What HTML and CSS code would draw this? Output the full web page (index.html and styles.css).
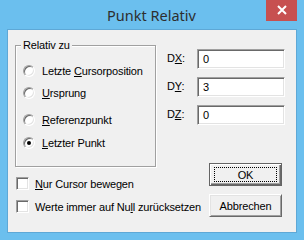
FILE: index.html
```html
<!DOCTYPE html>
<html>
<head>
<meta charset="utf-8">
<link rel="stylesheet" href="styles.css">
</head>
<body>
<div class="window">
  <div class="titlebar">
    <span class="title">Punkt Relativ</span>
    <span class="close">
      <svg width="10" height="10" viewBox="0 0 10 10"><path d="M1 1 L9 9 M9 1 L1 9" stroke="#fff" stroke-width="2"/></svg>
    </span>
  </div>
  <div class="client">
    <div class="left">
      <div class="group">
        <span class="legend">Relativ zu</span>
        <div class="radio r1"><span class="rb"></span><span>Letzte <u>C</u>ursorposition</span></div>
        <div class="radio r2"><span class="rb"></span><span><u>U</u>rsprung</span></div>
        <div class="radio r3"><span class="rb"></span><span><u>R</u>eferenzpunkt</span></div>
        <div class="radio r4"><span class="rb checked"></span><span><u>L</u>etzter Punkt</span></div>
      </div>
      <div class="check c1"><span class="cb"></span><span><u>N</u>ur Cursor bewegen</span></div>
      <div class="check c2"><span class="cb"></span><span>Werte immer auf Nu<u>l</u>l zurücksetzen</span></div>
    </div>
    <div class="right">
      <div class="field f1"><span class="lbl">D<u>X</u>:</span><span class="edit">0</span></div>
      <div class="field f2"><span class="lbl">D<u>Y</u>:</span><span class="edit">3</span></div>
      <div class="field f3"><span class="lbl">D<u>Z</u>:</span><span class="edit">0</span></div>
      <div class="btn default"><span class="focus">OK</span></div>
      <div class="btn second"><span>Abbrechen</span></div>
    </div>
  </div>
</div>
</body>
</html>
```
FILE: styles.css
```css
html, body {
  margin: 0;
  padding: 0;
}
body {
  width: 304px;
  height: 240px;
  overflow: hidden;
  font-family: "Liberation Sans", Arial, sans-serif;
  font-size: 11px;
  letter-spacing: -0.15px;
  color: #000;
}
.window {
  width: 304px;
  height: 240px;
  background: #6bbfee;
  box-sizing: border-box;
  padding: 0 8px 8px 8px;
  display: flex;
  flex-direction: column;
}
.titlebar {
  height: 30px;
  position: relative;
  display: flex;
  justify-content: center;
  align-items: center;
}
.title {
  font-family: "Noto Sans", "Open Sans", sans-serif;
  font-size: 14.5px;
  letter-spacing: 0;
  color: #2e2e2e;
  margin-top: -1px;
  margin-left: -1px;
}
.close {
  position: absolute;
  right: -1px;
  top: 0;
  width: 31px;
  height: 21px;
  background: #c75050;
  display: flex;
  align-items: center;
  justify-content: center;
}
.close svg {
  display: block;
  margin-top: -1px;
}
.client {
  flex: 1;
  background: #f0f0f0;
  display: flex;
  outline: 1px solid #5ea8d6;
}
.left {
  margin-left: 7px;
  width: 142px;
  display: flex;
  flex-direction: column;
}
.group {
  margin-top: 15px;
  width: 141px;
  height: 122px;
  box-sizing: border-box;
  border: 1px solid #a0a0a0;
  box-shadow: 1px 1px 0 #fff, inset 1px 1px 0 #fff;
  display: flex;
  flex-direction: column;
  align-items: flex-start;
}
.legend {
  margin-top: -7px;
  margin-left: 5px;
  padding: 0 2px;
  line-height: 13px;
  background: #f0f0f0;
}
.radio {
  display: flex;
  align-items: center;
  height: 14px;
  margin-left: 7px;
}
.r1 { margin-top: 12px; }
.r2 { margin-top: 8px; }
.r3 { margin-top: 13px; }
.r4 { margin-top: 9px; }
.rb {
  width: 12px;
  height: 12px;
  box-sizing: border-box;
  border-radius: 50%;
  background: #fff;
  border: 1px solid;
  border-color: #a0a0a0 #fff #fff #a0a0a0;
  box-shadow: inset 1px 1px 0 #696969, inset -1px -1px 0 #e3e3e3;
  margin-right: 7px;
  display: flex;
  align-items: center;
  justify-content: center;
}
.rb.checked::after {
  content: "";
  width: 4px;
  height: 4px;
  border-radius: 50%;
  background: #000;
}
.check {
  display: flex;
  align-items: center;
  height: 13px;
  margin-left: 1px;
  white-space: nowrap;
}
.c1 { margin-top: 10px; }
.c2 { margin-top: 10px; }
.cb {
  width: 13px;
  height: 13px;
  box-sizing: border-box;
  background: #fff;
  border: 1px solid;
  border-color: #a0a0a0 #fff #fff #a0a0a0;
  box-shadow: inset 1px 1px 0 #696969, inset -1px -1px 0 #e3e3e3;
  margin-right: 6px;
  flex: none;
}
.right {
  margin-left: 10px;
  display: flex;
  flex-direction: column;
}
.field {
  display: flex;
  align-items: center;
  height: 20px;
}
.f1 { margin-top: 19px; }
.f2 { margin-top: 8px; }
.f3 { margin-top: 8px; }
.lbl {
  width: 30px;
  padding-bottom: 2px;
}
.edit {
  width: 88px;
  height: 20px;
  box-sizing: border-box;
  background: #fff;
  border: 1px solid;
  border-color: #a0a0a0 #fff #fff #a0a0a0;
  box-shadow: inset 1px 1px 0 #696969, inset -1px -1px 0 #e3e3e3;
  padding: 0 5px;
  display: flex;
  align-items: center;
}
.btn {
  margin-left: 42px;
  width: 73px;
  height: 23px;
  box-sizing: border-box;
  background: #f0f0f0;
  display: flex;
  align-items: center;
  justify-content: center;
}
.btn.default {
  margin-top: 38px;
  border: 1px solid #646464;
  box-shadow: inset 1px 1px 0 #fff, inset -1px -1px 0 #696969, inset -2px -2px 0 #a0a0a0;
}
.btn.second {
  margin-top: 8px;
  border: 1px solid;
  border-color: #fff #696969 #696969 #fff;
  box-shadow: inset 1px 1px 0 #e3e3e3, inset -1px -1px 0 #a0a0a0;
}
.focus {
  width: 63px;
  height: 15px;
  box-sizing: border-box;
  border: 1px dotted #000;
  display: flex;
  align-items: center;
  justify-content: center;
}
```
